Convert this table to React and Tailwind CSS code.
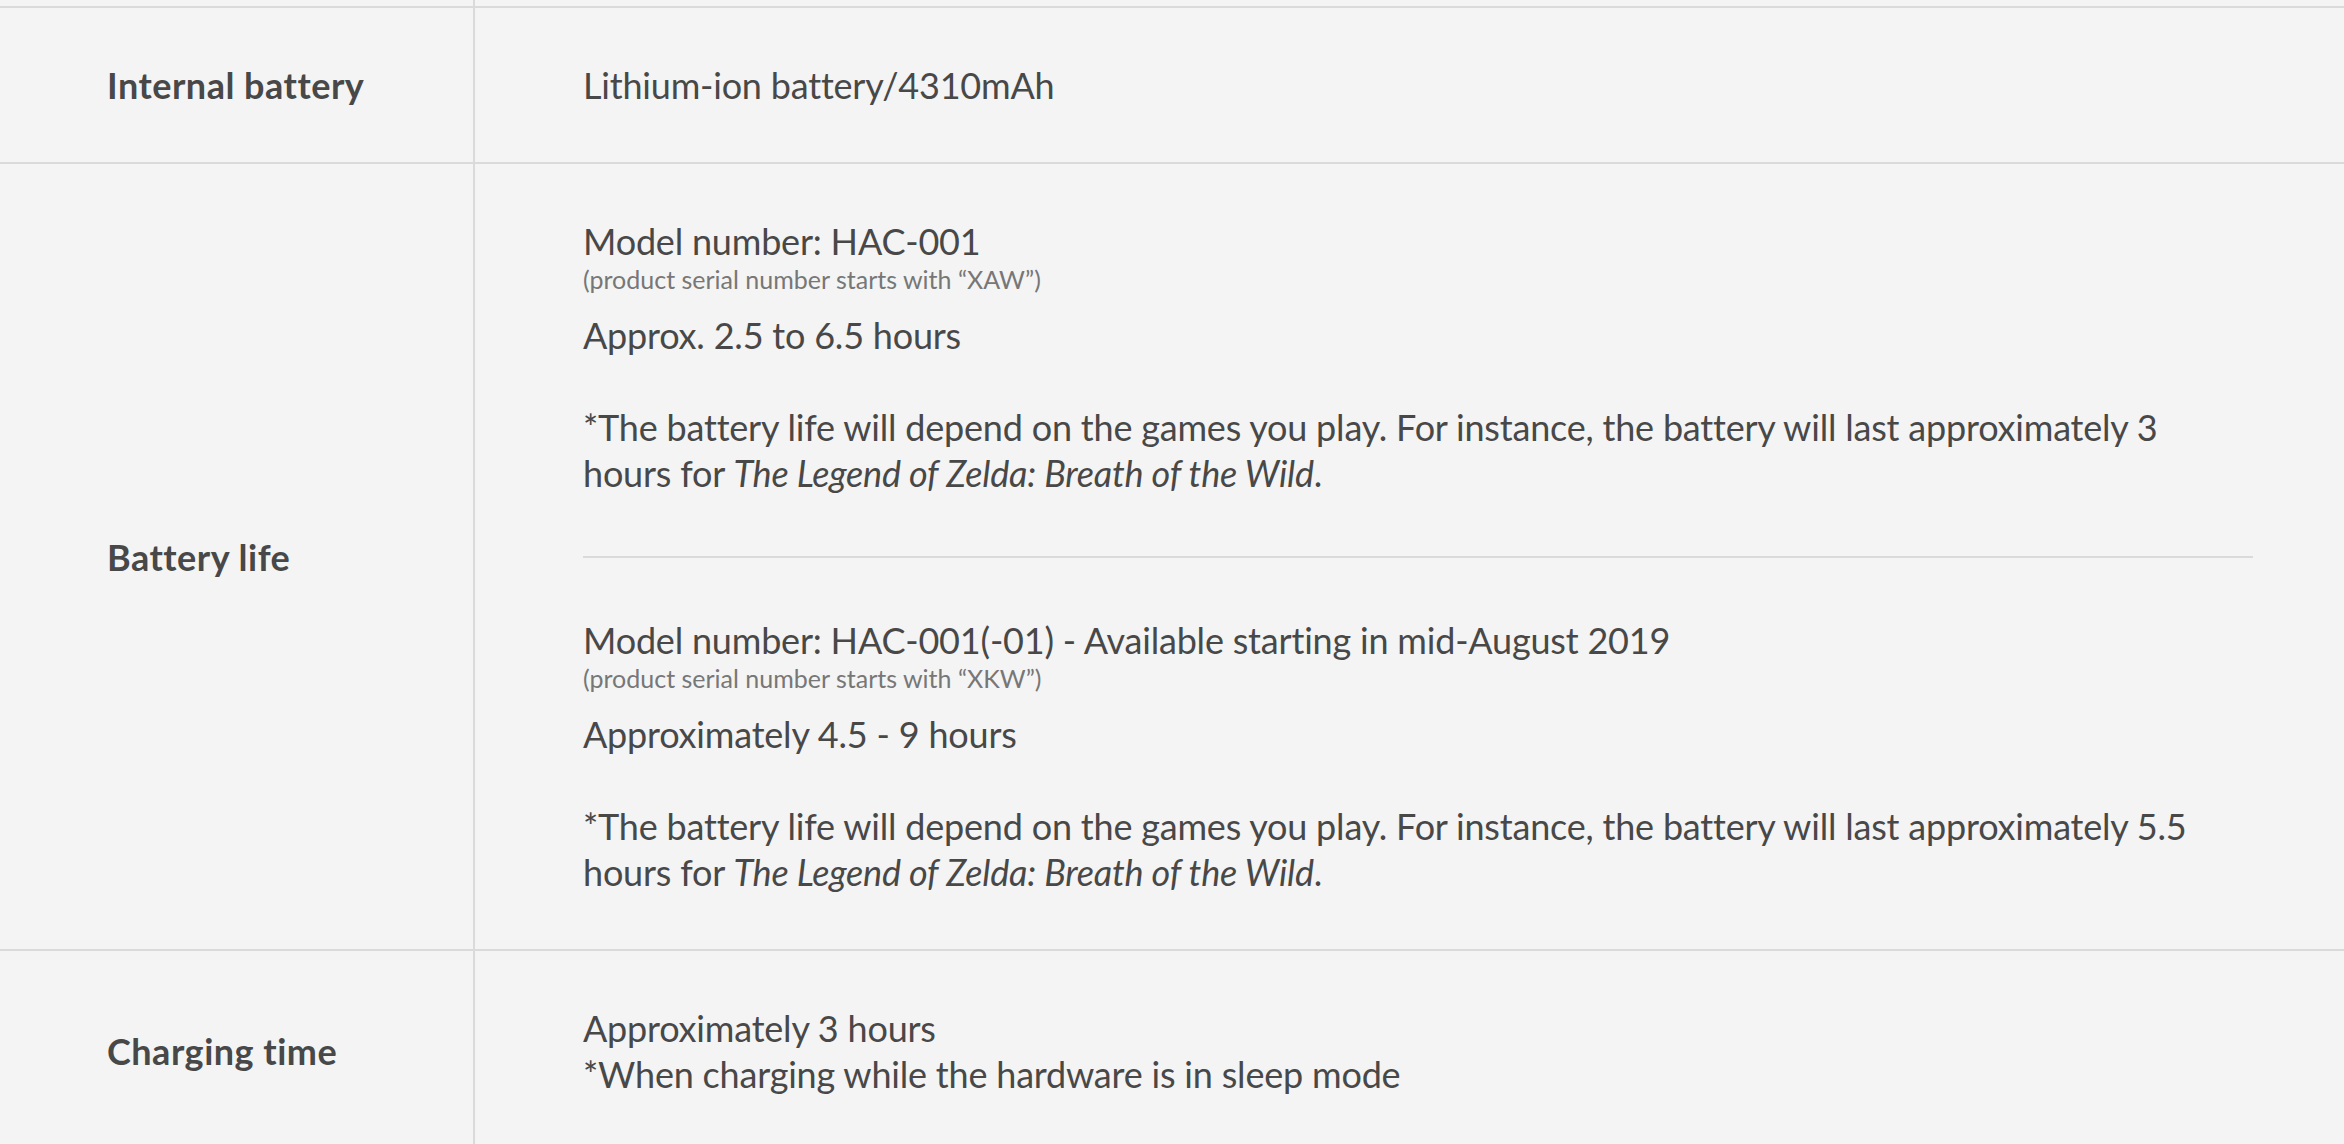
import React from 'react';

const Zelda = () => <i>The Legend of Zelda: Breath of the Wild</i>;

const Model = ({ model, serial, hours, lasts }) => (
  <div>
    <p className="leading-[46px]">{model}</p>
    <p className="text-[25px] leading-[30px] text-[#777777] mb-[18px] tracking-normal">{serial}</p>
    <p className="leading-[46px]">{hours}</p>
    <p className="leading-[46px] mt-[46px]">
      *The battery life will depend on the games you play. For instance, the battery will last approximately {lasts} hours for <Zelda />.
    </p>
  </div>
);

const Row = ({ label, children }) => (
  <div className="flex border-b-2 border-[#dadada]">
    <div className="w-[475px] shrink-0 border-r-2 border-[#dadada] pl-[107px] flex items-center font-bold tracking-[0.5px]">
      {label}
    </div>
    <div className="flex-1 pl-[108px] pr-[91px] py-[54px] tracking-[-0.2px]">{children}</div>
  </div>
);

export default function App() {
  return (
    <div
      className="min-h-screen bg-[#f4f4f4] text-[#484848] text-[36px]"
      style={{ fontFamily: 'Lato, "Noto Sans", sans-serif' }}
    >
      <div className="flex h-[8px] border-b-2 border-[#dadada]">
        <div className="w-[475px] border-r-2 border-[#dadada]"></div>
      </div>

      <Row label="Internal battery">
        <p className="leading-[46px]">Lithium-ion battery/4310mAh</p>
      </Row>

      <Row label="Battery life">
        <Model
          model="Model number: HAC-001"
          serial="(product serial number starts with “XAW”)"
          hours="Approx. 2.5 to 6.5 hours"
          lasts="3"
        />
        <div className="border-t-2 border-[#dadada] mt-[60px] mb-[59px]"></div>
        <Model
          model="Model number: HAC-001(-01) - Available starting in mid-August 2019"
          serial="(product serial number starts with “XKW”)"
          hours="Approximately 4.5 - 9 hours"
          lasts="5.5"
        />
      </Row>

      <Row label="Charging time">
        <p className="leading-[46px]">Approximately 3 hours</p>
        <p className="leading-[46px]">*When charging while the hardware is in sleep mode</p>
      </Row>
    </div>
  );
}
